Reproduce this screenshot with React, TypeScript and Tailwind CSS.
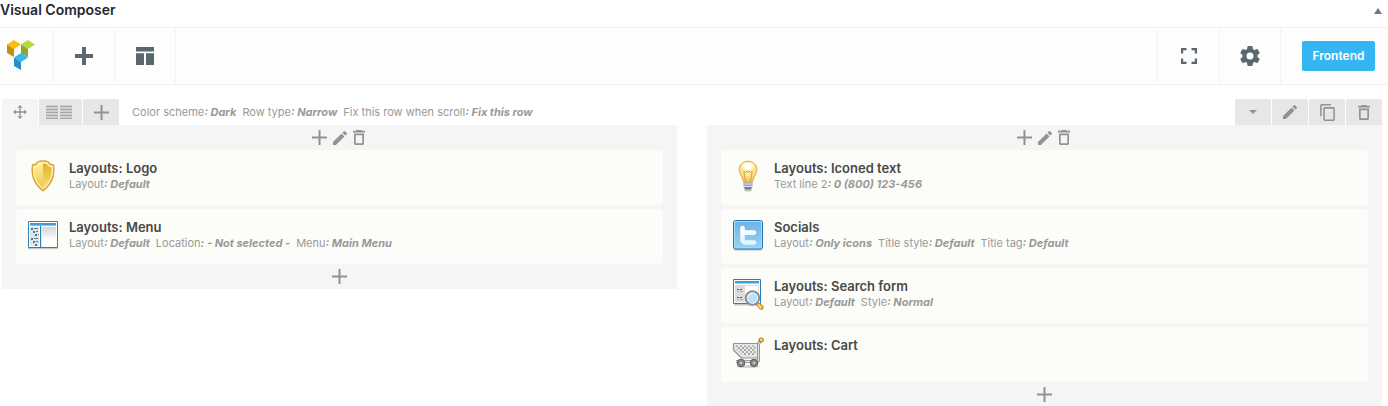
import type { ReactNode } from "react";

type Param = { name: string; value: string };
type Element = { title: string; icon: ReactNode; params: Param[] };

type GlyphProps = { box: string; className: string; children: ReactNode };

function Glyph({ box, className, children }: GlyphProps) {
  return (
    <svg viewBox={box} className={`block shrink-0 ${className}`} fill="currentColor" aria-hidden="true">
      {children}
    </svg>
  );
}

const AddIcon = () => (
  <Glyph box="0 0 15 15" className="size-[15px]">
    <path d="M6.5 0h2v6.5H15v2H8.5V15h-2V8.5H0v-2h6.5z" />
  </Glyph>
);

const EditIcon = () => (
  <Glyph box="3 3 18 18" className="size-[14px]">
    <path d="M3 17.25V21h3.75L17.81 9.94l-3.75-3.75L3 17.25zM20.71 7.04a1 1 0 0 0 0-1.41l-2.34-2.34a1 1 0 0 0-1.41 0l-1.83 1.83 3.75 3.75 1.83-1.83z" />
  </Glyph>
);

const TrashIcon = () => (
  <Glyph box="0 0 12 15" className="h-[15px] w-[12px]">
    <path d="M3.7 0h4.6l.7.8h3v1.6H0V.8h3z" />
    <path fillRule="evenodd" d="M1 3.5h10V13.4q0 1.6-1.6 1.6H2.6Q1 15 1 13.4zm1.7 1.7v8.1h6.6V5.2z" />
  </Glyph>
);

const CopyIcon = () => (
  <Glyph box="2 1 19 22" className="h-[17px] w-[15px]">
    <path d="M16 1H4c-1.1 0-2 .9-2 2v14h2V3h12V1zm3 4H8c-1.1 0-2 .9-2 2v14c0 1.1.9 2 2 2h11c1.1 0 2-.9 2-2V7c0-1.1-.9-2-2-2zm0 16H8V7h11v14z" />
  </Glyph>
);

const CaretIcon = () => (
  <Glyph box="0 0 8 4" className="h-[4px] w-[8px]">
    <path d="M0 0h8L4 4z" />
  </Glyph>
);

const MoveIcon = () => (
  <Glyph box="0 0 14 14" className="size-[14px]">
    <path d="M7 0l2.6 2.8H7.7v3.5h3.5V4.4L14 7l-2.8 2.6V7.7H7.7v3.5h1.9L7 14l-2.6-2.8h1.9V7.7H2.8v1.9L0 7l2.8-2.6v1.9h3.5V2.8H4.4z" />
  </Glyph>
);

const ColumnsIcon = () => (
  <Glyph box="0 0 26 14" className="h-[14px] w-[26px]">
    <path opacity=".35" d="M0 0h12v14H0zM14 0h12v14H14z" />
    {[1, 4, 7, 10, 13].map((y) => (
      <path key={y} d={`M0 ${y}h12v1H0zM14 ${y}h12v1H14z`} />
    ))}
  </Glyph>
);

const BoldAddIcon = () => (
  <Glyph box="0 0 18 18" className="size-[18px]">
    <path d="M7 0h4v7h7v4h-7v7H7v-7H0V7h7z" />
  </Glyph>
);

const TemplateIcon = () => (
  <Glyph box="0 0 18 18" className="size-[18px]">
    <path d="M0 0h18v4.5H0zM0 6.2h8V18H0zM10 6.2h8V18h-8z" />
  </Glyph>
);

const FullscreenIcon = () => (
  <Glyph box="0 0 16 16" className="size-[16px]">
    <path d="M0 0h5.5v2.2H2.2v3.3H0zM10.5 0H16v5.5h-2.2V2.2h-3.3zM0 10.5h2.2v3.3h3.3V16H0zM13.8 10.5H16V16h-5.5v-2.2h3.3z" />
  </Glyph>
);

const GearIcon = () => (
  <Glyph box="2 2 20 20" className="size-[20px]">
    <path d="M19.43 12.98c.04-.32.07-.64.07-.98s-.03-.66-.07-.98l2.11-1.65a.5.5 0 0 0 .12-.64l-2-3.46a.5.5 0 0 0-.61-.22l-2.49 1c-.52-.4-1.08-.73-1.69-.98l-.38-2.65A.49.49 0 0 0 14 2h-4a.49.49 0 0 0-.49.42l-.38 2.65c-.61.25-1.17.59-1.69.98l-2.49-1a.49.49 0 0 0-.61.22l-2 3.46a.49.49 0 0 0 .12.64l2.11 1.65c-.04.32-.07.65-.07.98s.03.66.07.98l-2.11 1.65a.5.5 0 0 0-.12.64l2 3.46c.12.22.39.3.61.22l2.49-1c.52.4 1.08.73 1.69.98l.38 2.65c.03.24.24.42.49.42h4c.25 0 .46-.18.49-.42l.38-2.65c.61-.25 1.17-.59 1.69-.98l2.49 1c.23.09.49 0 .61-.22l2-3.46a.5.5 0 0 0-.12-.64l-2.11-1.65zM12 15.500a3.500 3.500 0 1 1 0-7 3.500 3.500 0 0 1 0 7z" />
  </Glyph>
);

const BrandIcon = () => (
  <Glyph box="0 0 28 30" className="h-[30px] w-[28px]">
    <path fill="#fbbf0a" d="M0 4.500L7 0l7 4.500L7 9z" />
    <path fill="#c19006" d="M0 4.500L7 9v8l-7-4z" />
    <path fill="#b8d543" d="M14 4.500L21 0l7 4.500L21 9z" />
    <path fill="#8da62f" d="M14 4.500L21 9v8l-7-3.500z" />
    <path fill="#39b5f0" d="M7 17.500l7-4.500 7 4.500-7 4.500z" />
    <path fill="#2690c5" d="M7 17.500l7 4.500v8l-7-4z" />
  </Glyph>
);

const ShieldIcon = () => (
  <svg viewBox="0 0 32 32" className="block size-8 shrink-0" aria-hidden="true">
    <defs>
      <linearGradient id="shieldLeft" x2="0" y2="1">
        <stop stopColor="#fff09a" />
        <stop offset="1" stopColor="#efc64a" />
      </linearGradient>
      <linearGradient id="shieldRight" x2="0" y2="1">
        <stop stopColor="#e3b32e" />
        <stop offset="1" stopColor="#f7dc70" />
      </linearGradient>
    </defs>
    <path fill="#b5b5ad" opacity=".6" d="M5 9q-1 12 11 23 12-11 11-23z" />
    <path
      fill="#fff3b8"
      stroke="#dda033"
      strokeWidth="1.4"
      strokeLinejoin="round"
      d="M16 1c2 0 4 .2 5.500 1 .5 2 2.500 3 5 3 1.500 11-1.500 19-10.500 25.500C7 24 4 16 5.500 5c2.500 0 4.500-1 5-3C12 1.200 14 1 16 1z"
    />
    <path fill="url(#shieldLeft)" d="M16 3.500c-1.500 0-2.700.1-3.700.5-1 2-2.700 3-4.800 3.300C6.700 15.500 9 22.500 16 28z" />
    <path fill="url(#shieldRight)" d="M16 3.500c1.500 0 2.700.1 3.700.5 1 2 2.700 3 4.800 3.300C25.300 15.500 23 22.500 16 28z" />
  </svg>
);

const PanelsIcon = () => (
  <svg viewBox="0 -1 32 32" className="block size-8 shrink-0" aria-hidden="true">
    <defs>
      <linearGradient id="panelFill" x2="0" y2="1">
        <stop stopColor="#d6d6d6" />
        <stop offset=".7" stopColor="#fff" />
      </linearGradient>
    </defs>
    <path fill="#c5c8c8" d="M1 28h30v1.200H1z" />
    <path fill="#fff" stroke="#2683b8" d="M1.500 1.500h29v26h-29z" />
    <path fill="#3d9edb" d="M3 3h26v3H3z" />
    <path fill="#83c6ec" d="M3 5h26v1H3z" />
    <path fill="#e4e4e4" d="M3 7h9v19H3z" />
    <path fill="#2683b8" d="M13 6h1.200v21H13z" />
    <path fill="url(#panelFill)" d="M15 7h14v19H15z" />
    <path fill="#2f7fc4" d="M4 8h2v2H4zM6 11h2v2H6zM8 14h2v2H8zM4 18h2v2H4zM6 21h2v2H6zM8 24h2v2H8z" />
    <path fill="#6d7478" d="M7 8h4v1H7zM9 11h2v1H9zM11 14h1v1h-1zM7 18h4v1H7zM9 21h2v1H9z" />
  </svg>
);

const BulbIcon = () => (
  <svg viewBox="0 0 32 32" className="block size-8 shrink-0" aria-hidden="true">
    <defs>
      <radialGradient id="bulbGlow" cx=".5" cy=".3" r=".65">
        <stop stopColor="#fffbe0" />
        <stop offset=".6" stopColor="#fde58e" />
        <stop offset="1" stopColor="#f5c252" />
      </radialGradient>
    </defs>
    <ellipse cx="16" cy="30" rx="4" ry="1.500" fill="#c8c8c0" />
    <path
      fill="url(#bulbGlow)"
      stroke="#dfaa48"
      d="M16 1.200c5.200 0 8.900 3.800 8.900 8.500 0 3.800-2.200 5.600-3.400 8.300-.6 1.400-.6 3-1.200 4.300h-8.600c-.6-1.300-.6-2.900-1.200-4.300C9.300 15.300 7.100 13.500 7.100 9.700c0-4.700 3.700-8.500 8.900-8.500z"
    />
    <ellipse cx="16" cy="6" rx="5.500" ry="3.600" fill="#fff" opacity=".8" />
    <path fill="none" stroke="#c99d4c" strokeWidth=".9" d="M13.500 22l-1.700-11 1.700 1.500 1.500-1.500 1 1.500 1-1.500 1.500 1.500 1.700-1.500-1.700 11" />
    <path fill="#9aa7b8" d="M11.500 22.500h9v4l-2 3.500h-5l-2-3.500z" />
    <path stroke="#dce4ee" d="M11.500 24h9M12 26.500h8" />
    <path fill="#5f6b7c" d="M12 27.500h8l-1 1.200h-6z" />
  </svg>
);

const SocialIcon = () => (
  <svg viewBox="0 0 32 32" className="block size-8 shrink-0" aria-hidden="true">
    <defs>
      <linearGradient id="socialFill" x2="0" y2="1">
        <stop stopColor="#6fb3e2" />
        <stop offset="1" stopColor="#93d4f4" />
      </linearGradient>
      <linearGradient id="socialLetter" x2="0" y2="1">
        <stop stopColor="#fff" />
        <stop offset="1" stopColor="#e3f4fd" />
      </linearGradient>
    </defs>
    <rect x="1.500" y="3" width="29" height="28.500" rx="2" fill="#b9c1c5" />
    <rect x="1.500" y="1.500" width="29" height="28.500" rx="2" fill="#a7dbf6" stroke="#2475b5" />
    <rect x="3" y="3" width="26" height="25.500" rx="1" fill="url(#socialFill)" />
    <path
      fill="none"
      stroke="url(#socialLetter)"
      strokeWidth="4.600"
      strokeLinecap="round"
      strokeLinejoin="round"
      d="M10.500 9v11q0 3.500 3.500 3.500h8M11 13.600h11"
    />
  </svg>
);

const SearchFormIcon = () => (
  <svg viewBox="0 0 32 32" className="block size-8 shrink-0" aria-hidden="true">
    <path fill="#c5c8c8" d="M2 26h27v1.500H2z" />
    <path fill="#fff" stroke="#2683b8" d="M1.500 1.500h27v24h-27z" />
    <path fill="#3d9edb" d="M3 3h24v3H3z" />
    <path fill="#9bd2f1" d="M3 5h24v1H3z" />
    <path fill="#dcdcdc" d="M3 7h24v17H3z" />
    <path fill="#fff" d="M13 8h13v14H13z" />
    <path stroke="#575757" strokeDasharray="2 1" d="M5 11.500h6M5 19.500h6" />
    <path stroke="#aaa" d="M5 13.500h2M8 13.500h3M5 21.500h2M8 21.500h3" />
    <path stroke="#9b9b9b" strokeWidth="3" d="M24 25l3 3" />
    <path stroke="#cf8b22" strokeWidth="4.600" strokeLinecap="round" d="M27 27.200l2.300 2.300" />
    <path stroke="#ffd36a" strokeWidth="2.600" strokeLinecap="round" d="M26.700 27.200l2.300 2.300" />
    <circle cx="20.500" cy="20" r="6.700" fill="#bfe2fb" stroke="#8d8d8d" strokeWidth="2" />
    <circle cx="20.500" cy="20" r="5.200" fill="#b9e0fc" stroke="#f4f9fd" strokeWidth=".8" />
    <path fill="#e6f6ff" d="M16.500 19q1-4 5-3.500-3 1-5 3.500z" />
  </svg>
);

const CartIcon = () => (
  <svg viewBox="0 0 32 32" className="block size-8 shrink-0" aria-hidden="true">
    <defs>
      <pattern id="cartMesh" width="4" height="4" patternUnits="userSpaceOnUse">
        <path fill="#ececec" d="M0 0h4v4H0z" />
        <path fill="#a9a9a9" d="M0 0h2v2H0zM2 2h2v2H2z" />
      </pattern>
    </defs>
    <ellipse cx="16" cy="29.500" rx="12" ry="1.500" fill="#d2d2cc" />
    <path fill="#e4e4e4" stroke="#949494" strokeWidth="1.200" strokeLinejoin="round" d="M1.500 6.500h25v14.500H9.500l-8-8z" />
    <path fill="url(#cartMesh)" d="M4 8.500h19.500v9.500H11L4 12z" />
    <path fill="none" stroke="#8d8d8d" strokeWidth="3" strokeLinejoin="round" d="M29 3.500l-2.500 3v16.500q0 1.500-3 1.500H4" />
    <path fill="none" stroke="#dedede" strokeWidth="1.300" d="M28.500 4l-2 2.700v16q0 1.800-3 1.800H4" />
    <circle cx="29.200" cy="3" r="2" fill="#ffd66d" stroke="#b57b1e" strokeWidth="1.200" />
    <circle cx="9" cy="26" r="3.800" fill="#858585" stroke="#5d5d5d" />
    <circle cx="22" cy="26" r="3.800" fill="#858585" stroke="#5d5d5d" />
    <circle cx="9" cy="26" r="1.300" fill="#d0d0d0" />
    <circle cx="22" cy="26" r="1.300" fill="#d0d0d0" />
  </svg>
);

const columns: Element[][] = [
  [
    { title: "Layouts: Logo", icon: <ShieldIcon />, params: [{ name: "Layout", value: "Default" }] },
    {
      title: "Layouts: Menu",
      icon: <PanelsIcon />,
      params: [
        { name: "Layout", value: "Default" },
        { name: "Location", value: "- Not selected -" },
        { name: "Menu", value: "Main Menu" },
      ],
    },
  ],
  [
    { title: "Layouts: Iconed text", icon: <BulbIcon />, params: [{ name: "Text line 2", value: "0 (800) 123-456" }] },
    {
      title: "Socials",
      icon: <SocialIcon />,
      params: [
        { name: "Layout", value: "Only icons" },
        { name: "Title style", value: "Default" },
        { name: "Title tag", value: "Default" },
      ],
    },
    {
      title: "Layouts: Search form",
      icon: <SearchFormIcon />,
      params: [
        { name: "Layout", value: "Default" },
        { name: "Style", value: "Normal" },
      ],
    },
    { title: "Layouts: Cart", icon: <CartIcon />, params: [] },
  ],
];

const rowParams: Param[] = [
  { name: "Color scheme", value: "Dark" },
  { name: "Row type", value: "Narrow" },
  { name: "Fix this row when scroll", value: "Fix this row" },
];

function Params({ items }: { items: Param[] }) {
  return (
    <p className="flex flex-wrap gap-x-[6px] text-[11px] leading-4 text-[#999999]">
      {items.map((item) => (
        <span key={item.name}>
          {item.name}
          <em className="font-bold">: {item.value}</em>
        </span>
      ))}
    </p>
  );
}

function IconButton({ label, className, children }: { label: string; className?: string; children: ReactNode }) {
  return (
    <button type="button" aria-label={label} className={`flex items-center justify-center ${className ?? ""}`}>
      {children}
    </button>
  );
}

function Column({ elements }: { elements: Element[] }) {
  return (
    <section className="flex-1 bg-[#f5f5f5] px-[14px] text-[#929292]">
      <div className="flex h-[25px] items-center justify-center gap-[6px] pr-[2px]">
        <IconButton label="Add element"><AddIcon /></IconButton>
        <IconButton label="Edit column"><EditIcon /></IconButton>
        <IconButton label="Delete column"><TrashIcon /></IconButton>
      </div>
      <ul className="flex flex-col gap-1">
        {elements.map((element) => (
          <li key={element.title} className="flex h-[55px] gap-[10px] rounded-[3px] bg-[#fcfdf8] px-[11px] py-[10px]">
            {element.icon}
            <div>
              <h3 className="text-[13px] leading-4 font-semibold text-[#484848]">{element.title}</h3>
              <Params items={element.params} />
            </div>
          </li>
        ))}
      </ul>
      <div className="flex h-[25px] items-center justify-center">
        <IconButton label="Append element"><AddIcon /></IconButton>
      </div>
    </section>
  );
}

export default function App() {
  return (
    <main className="bg-white font-['Inter',sans-serif]">
      <header className="flex h-[27px] items-start justify-between pr-[6px]">
        <h2 className="text-[14px] leading-5 font-semibold text-[#23282d]">Visual Composer</h2>
        <button type="button" aria-label="Toggle panel" className="mt-[8px] text-[#72777c]">
          <Glyph box="0 0 8 6" className="h-[6px] w-[8px]"><path d="M4 0l4 6H0z" /></Glyph>
        </button>
      </header>

      <nav className="flex h-[58px] border-y border-[#f0f0f0] bg-[#fdfdfd] text-[#5a676f]">
        <a href="#about" aria-label="Visual Composer" className="flex w-[54px] items-center border-r border-[#f2f2f2] pb-[2px] pl-[7px]">
          <BrandIcon />
        </a>
        <IconButton label="Add new element" className="w-[61px] border-r border-[#f2f2f2]"><BoldAddIcon /></IconButton>
        <IconButton label="Templates" className="w-[61px] border-r border-[#f2f2f2]"><TemplateIcon /></IconButton>
        <div className="ml-auto flex">
          <IconButton label="Fullscreen" className="w-[63px] border-x border-[#f2f2f2]"><FullscreenIcon /></IconButton>
          <IconButton label="Settings" className="w-[61px] border-r border-[#f2f2f2]"><GearIcon /></IconButton>
          <div className="flex items-center pr-[13px] pl-[21px]">
            <button type="button" className="h-[30px] w-[73px] rounded-[2px] bg-[#36b5f3] text-[12px] font-semibold text-white">
              Frontend
            </button>
          </div>
        </div>
      </nav>

      <div className="pt-[14px] pr-[6px] pl-[2px]">
        <div className="flex h-[26px] gap-px text-[#929292]">
          <IconButton label="Move row" className="w-[36px] rounded-t-[2px] bg-[#f5f5f5]"><MoveIcon /></IconButton>
          <IconButton label="Change columns" className="w-[43px] rounded-t-[2px] bg-[#e7e7e7] pr-[3px] text-[#a6a6a6]"><ColumnsIcon /></IconButton>
          <IconButton label="Add column" className="w-[36px] rounded-t-[2px] bg-[#e7e7e7]"><AddIcon /></IconButton>
          <div className="flex items-center pl-[12px]"><Params items={rowParams} /></div>
          <div className="ml-auto flex gap-px">
            <IconButton label="Collapse row" className="w-[36px] rounded-t-[2px] bg-[#e7e7e7]"><CaretIcon /></IconButton>
            <IconButton label="Edit row" className="w-[36px] rounded-t-[2px] bg-[#e7e7e7]"><EditIcon /></IconButton>
            <IconButton label="Clone row" className="w-[36px] rounded-t-[2px] bg-[#e7e7e7]"><CopyIcon /></IconButton>
            <IconButton label="Delete row" className="w-[36px] rounded-t-[2px] bg-[#e7e7e7]"><TrashIcon /></IconButton>
          </div>
        </div>
        <div className="flex items-start gap-[30px]">
          {columns.map((elements) => (
            <Column key={elements[0].title} elements={elements} />
          ))}
        </div>
      </div>
    </main>
  );
}
